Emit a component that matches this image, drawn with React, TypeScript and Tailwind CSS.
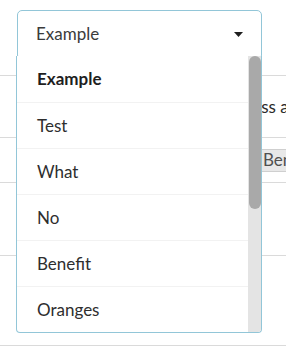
import React from 'react';

const OPTIONS = ['Example', 'Test', 'What', 'No', 'Benefit', 'Oranges'];

// Dropdown caret
function Caret() {
  return (
    <svg width="9" height="5" viewBox="0 0 9 5" className="block">
      <path d="M0 0 H9 L4.5 5 Z" fill="#1f1f1f" />
    </svg>
  );
}

// Open options list
function OptionsPanel({ selected }: { selected: string }) {
  return (
    <div className="absolute left-[16px] top-[56px] w-[246px] bg-white border border-t-0 border-[#92c6d8] rounded-b-[4px] flex overflow-hidden">
      <ul className="flex-1 flex flex-col">
        {OPTIONS.map((opt, i) => (
          <li
            key={opt}
            className={
              'h-[46px] flex items-center pl-[20px] text-[17px] ' +
              (i > 0 ? 'border-t border-[#f2f2f2] ' : '') +
              (opt === selected ? 'font-bold text-[#1e1e1e]' : 'text-[#2e2e2e]')
            }
          >
            {opt}
          </li>
        ))}
      </ul>
      {/* Scrollbar */}
      <div className="w-[13px] bg-[#e4e4e4] flex flex-col items-end">
        <div className="w-[12px] h-[153px] bg-[#a9a9a9] rounded-full" />
      </div>
    </div>
  );
}

export default function App() {
  return (
    <div
      className="relative w-[286px] h-[348px] bg-white overflow-hidden"
      style={{ fontFamily: 'Lato, "Noto Sans", sans-serif' }}
    >
      {/* Page behind the dropdown */}
      <div className="h-[75px] pt-[10px] pl-[17px]">
        <div className="w-[245px] h-[50px] border border-[#92c6d8] rounded-[5px] flex items-start pt-[11px] pl-[18px] pr-[18px] justify-between">
          <span className="text-[17px] text-[#3b3b3b] leading-[24px]">Example</span>
          <span className="mt-[10px]">
            <Caret />
          </span>
        </div>
      </div>
      <div className="border-t border-[#dadada] h-[62px] flex items-center pl-[225px] whitespace-nowrap text-[17px] text-[#2a2a2a]">
        Access all options
      </div>
      <div className="border-t border-[#dadada] h-[45px] flex items-center pl-[254px]">
        <span className="h-[23px] px-[8px] flex items-center bg-[#e8e8e8] border border-[#cfcfcf] rounded-[3px] text-[17px] text-[#505050] whitespace-nowrap">
          Benefit
        </span>
      </div>
      <div className="border-t border-[#dadada] h-[73px]" />
      <div className="border-t border-[#dadada] h-[90px]" />
      <div className="border-t border-[#dadada]" />

      <OptionsPanel selected="Example" />
    </div>
  );
}
